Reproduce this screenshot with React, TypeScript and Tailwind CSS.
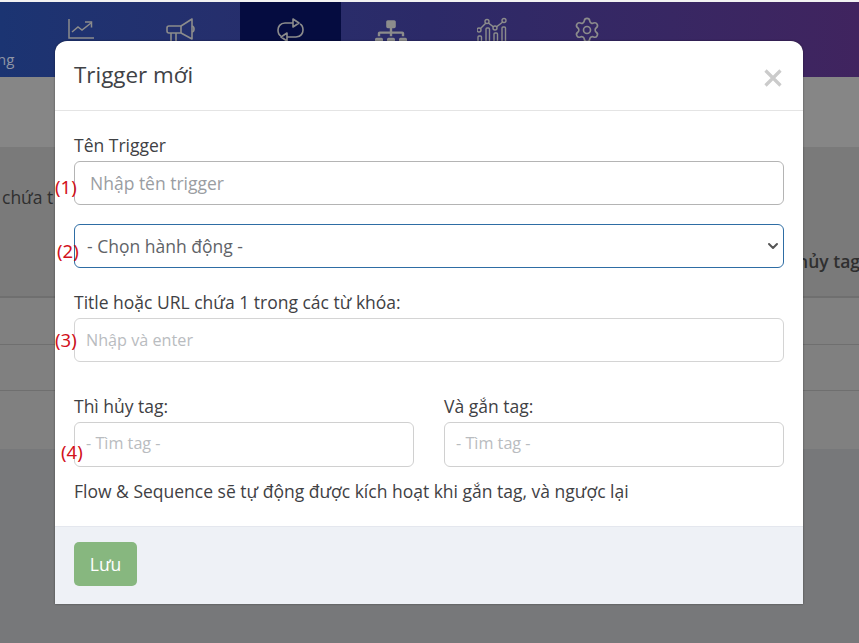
import { ChevronDown, Settings } from 'lucide-react'
import { FaSitemap } from 'react-icons/fa'

// Nav icons, dimmed by the modal backdrop
function ChartIcon() {
  return (
    <svg width="28" height="24" viewBox="0 0 28 24" fill="none" stroke="currentColor" strokeWidth="1.5">
      <path d="M2 2v19h25" />
      <path d="M5 15l6-5 4 3 9-7" />
      <path d="M18 5h6.500v5.500" />
    </svg>
  )
}

function MegaphoneIcon() {
  return (
    <svg width="30" height="28" viewBox="0 0 30 28" fill="none" stroke="currentColor" strokeWidth="1.6" strokeLinejoin="round">
      <path d="M3 9h12l11-7v20l-11-6H3a2 2 0 0 1-2-2v-3a2 2 0 0 1 2-2z" />
      <path d="M15 9v7" />
      <path d="M26 9a3 3 0 0 1 2 3 3 3 0 0 1-2 3" />
      <path d="M5 16v9M10 16v9" />
    </svg>
  )
}

function RepeatIcon() {
  return (
    <svg width="28" height="26" viewBox="0 0 28 26" fill="none" stroke="currentColor" strokeWidth="1.600" strokeLinejoin="round">
      <path d="M16 6H8C3 6 1 10 1 13c0 3 1 5 3 6" />
      <path d="M16 2l6 4-6 4z" />
      <path d="M10 20h9c5 0 7-4 7-7 0-3-1-5-3-6" />
      <path d="M10 16l-6 4 6 4z" />
    </svg>
  )
}

function BarsLineIcon() {
  return (
    <svg width="30" height="28" viewBox="0 0 30 28" fill="none" stroke="currentColor" strokeWidth="1.400">
      <path d="M2 13l8-8 8 6 9-7" />
      <circle cx="10" cy="4.500" r="2" fill="#322862" />
      <circle cx="18" cy="11" r="2" fill="#322862" />
      <circle cx="27" cy="3.500" r="2" fill="#322862" />
      <circle cx="2" cy="13" r="2" fill="#322862" />
      <rect x="1" y="19" width="3.500" height="9" rx="1" />
      <rect x="9" y="11" width="3.500" height="17" rx="1" />
      <rect x="17" y="16" width="3.500" height="12" rx="1" />
      <rect x="25" y="10" width="3.500" height="18" rx="1" />
    </svg>
  )
}

function BackgroundPage() {
  return (
    <div className="flex flex-col h-[643px] overflow-hidden bg-[#77787a] text-[#2f2f2f]">
      <div className="h-[2px] bg-[#f2f2f2]" />
      <div className="flex h-[75px] bg-gradient-to-r from-[#1b3472] via-[#2c2a68] to-[#40245f] text-[#8c8c8c]">
        <div className="w-[40px] pt-[47px] text-[15px] leading-[20px] text-[#8f94a5]">
          <span className="block -ml-[3px]">ng</span>
        </div>
        <div className="flex w-[80px] justify-center pt-[15px] pl-[1px]"><ChartIcon /></div>
        <div className="flex w-[120px] justify-center pt-[15px] pl-[2px]"><MegaphoneIcon /></div>
        <div className="flex w-[101px] justify-center pt-[15px] bg-[#050c40]"><RepeatIcon /></div>
        <div className="flex w-[100px] justify-center pt-[15px]"><FaSitemap size={32} /></div>
        <div className="flex w-[102px] justify-center pt-[15px]"><BarsLineIcon /></div>
        <div className="flex w-[87px] justify-center pt-[14px]"><Settings size={28} strokeWidth={1.4} /></div>
      </div>
      <div className="h-[70px] bg-[#868686]" />
      <div className="flex h-[151px] bg-[#7a7a7a] border-b-[2px] border-[#6f6f6f]">
        <div className="pt-[38px] pl-[2px] text-[17.500px] leading-[24px]">chứa t</div>
        <div className="ml-auto pt-[102px] text-[17.500px] leading-[24px] font-semibold whitespace-nowrap -mr-[1px]">hủy tag</div>
      </div>
      <div className="h-[47px] bg-[#808080] border-b border-[#6f6f6f]" />
      <div className="h-[46px] bg-[#808080] border-b border-[#6f6f6f]" />
      <div className="h-[58px] bg-[#808080]" />
    </div>
  )
}

function Marker({ className, children }: { className: string; children: string }) {
  return <span className={`absolute text-[18.500px] leading-[20px] text-[#d2111c] font-['Noto_Sans',sans-serif] ${className}`}>{children}</span>
}

export default function App() {
  return (
    <div className="relative h-[643px] w-[859px] overflow-hidden font-['Open_Sans',sans-serif]">
      <BackgroundPage />
      {/* Modal */}
      <div className="absolute left-[55px] top-[41px] w-[748px] rounded-t-[12px] overflow-hidden bg-white shadow-[0_0_2px_rgba(0,0,0,0.5)] text-[#3f4144]">
        <div className="flex h-[70px] items-center justify-between border-b border-[#e4e4e4] pl-[19px] pr-[21px]">
          <h2 className="text-[22.400px] leading-[30px] text-[#404246] pb-[2px]">Trigger mới</h2>
          <svg width="18" height="18" viewBox="0 0 18 18" className="mt-[5px]" stroke="#cbcbcb" strokeWidth="3.200">
            <path d="M1.500 1.500l15 15M16.500 1.500l-15 15" />
          </svg>
        </div>
        <div className="flex flex-col pl-[19px] pr-[19px] pt-[22px] h-[416px] border-b border-[#e4e7ee]">
          <label className="text-[17.500px] leading-[24px] mb-[4px]">Tên Trigger</label>
          <div className="flex h-[44px] items-center rounded-[6px] border border-[#b4b4b4] pl-[15px] text-[17.500px] text-[#9a9da2] mb-[19px]">
            Nhập tên trigger
          </div>
          <div className="flex h-[44px] items-center justify-between rounded-[6px] border border-[#2e6da4] pl-[12px] pr-[2px] text-[17.500px] text-[#5f6368] mb-[23px]">
            - Chọn hành động -
            <ChevronDown size={16} strokeWidth={3} className="text-[#555]" />
          </div>
          <label className="text-[17.500px] leading-[22px] mb-[5px]">Title hoặc URL chứa 1 trong các từ khóa:</label>
          <div className="flex h-[44px] items-center rounded-[6px] border border-[#d4d4d4] pl-[11px] text-[16.200px] text-[#b9bcc0] mb-[33px]">
            Nhập và enter
          </div>
          <div className="flex gap-[30px]">
            <div className="flex flex-1 flex-col">
              <label className="text-[17.500px] leading-[22px] mb-[5px]">Thì hủy tag:</label>
              <div className="flex h-[45px] items-center rounded-[6px] border border-[#d0d0d0] pl-[11px] text-[16.200px] text-[#b9bcc0] pb-[2px]">- Tìm tag -</div>
            </div>
            <div className="flex flex-1 flex-col">
              <label className="text-[17.500px] leading-[22px] mb-[5px]">Và gắn tag:</label>
              <div className="flex h-[45px] items-center rounded-[6px] border border-[#d0d0d0] pl-[11px] text-[16.200px] text-[#b9bcc0] pb-[2px]">- Tìm tag -</div>
            </div>
          </div>
          <p className="mt-[12px] text-[17.500px] leading-[24px]">Flow &amp; Sequence sẽ tự động được kích hoạt khi gắn tag, và ngược lại</p>
        </div>
        <div className="flex h-[77px] items-start bg-[#eef1f6] pl-[19px] pt-[15px]">
          <button type="button" className="h-[44px] w-[63px] rounded-[5px] bg-[#87b77f] text-[17.500px] text-white">Lưu</button>
        </div>
      </div>
      <Marker className="left-[55px] top-[177px]">(1)</Marker>
      <Marker className="left-[57px] top-[241px]">(2)</Marker>
      <Marker className="left-[55px] top-[330px]">(3)</Marker>
      <Marker className="left-[61px] top-[442px]">(4)</Marker>
    </div>
  )
}
